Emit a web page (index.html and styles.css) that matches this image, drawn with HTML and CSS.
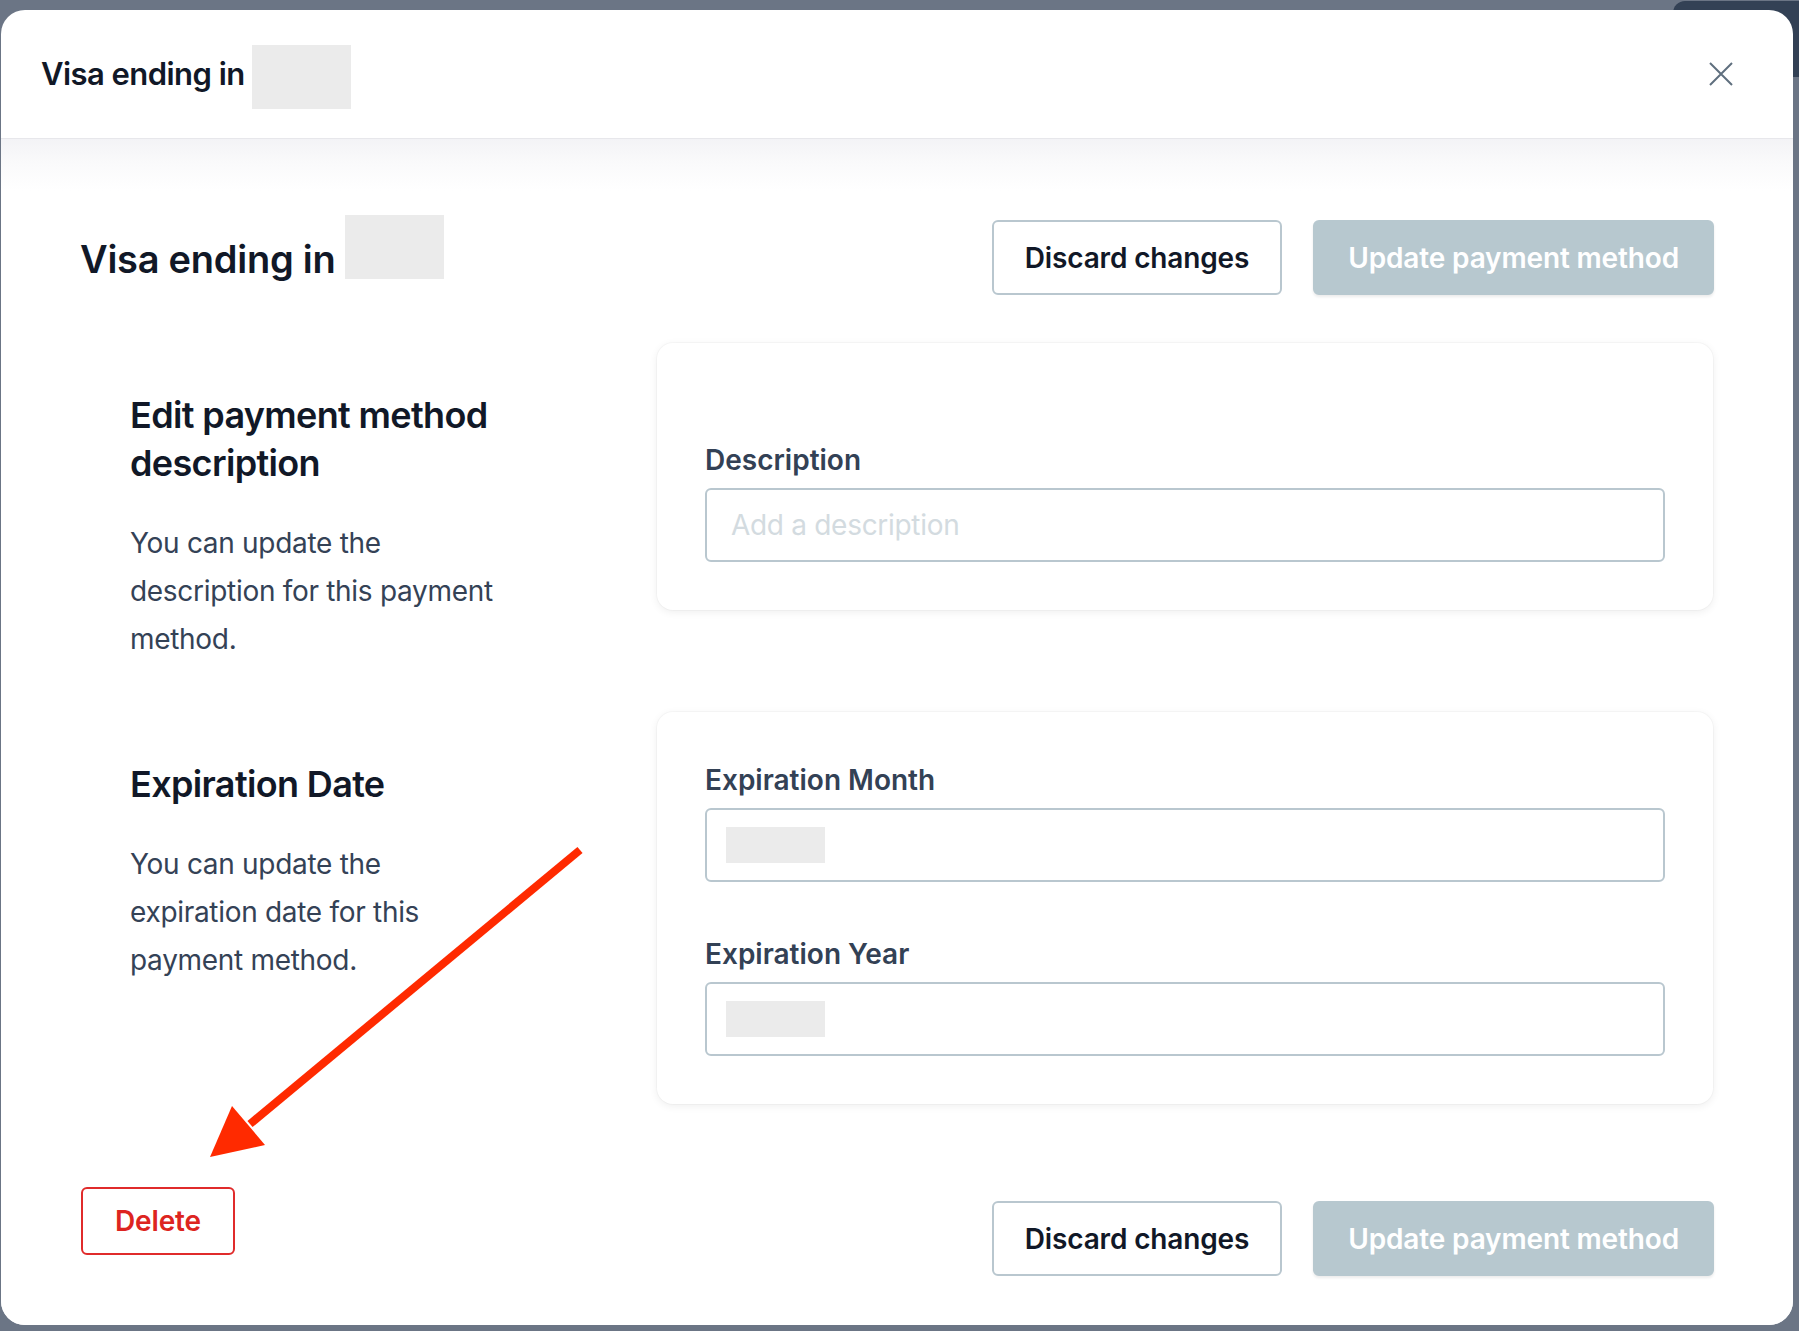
FILE: index.html
```html
<!DOCTYPE html>
<html lang="en">
<head>
<meta charset="utf-8">
<title>Visa ending in</title>
<link rel="stylesheet" href="styles.css">
</head>
<body>
<div class="backdrop">
  <div class="bg-tab"></div>
  <div class="modal">
    <header class="modal-header">
      <h1 class="modal-title">Visa ending in <span class="redact redact--title"></span></h1>
      <button class="close" type="button" aria-label="Close">
        <svg width="24" height="24" viewBox="0 0 24 24"><path d="M1 1 L23 23 M23 1 L1 23" stroke="#5f6f7e" stroke-width="2" fill="none"/></svg>
      </button>
    </header>
    <div class="modal-body">
      <div class="topbar">
        <h2 class="page-title">Visa ending in <span class="redact redact--page"></span></h2>
        <div class="actions actions--top">
          <button class="btn btn--secondary" type="button">Discard changes</button>
          <button class="btn btn--primary" type="button">Update payment method</button>
        </div>
      </div>

      <div class="sections">
        <section class="section">
          <div class="section-intro">
            <h3 class="section-title">Edit payment method description</h3>
            <p class="section-text">You can update the description for this payment method.</p>
          </div>
          <div class="card card--desc">
            <div class="field">
              <label class="field-label" for="desc">Description</label>
              <input class="input" id="desc" type="text" placeholder="Add a description">
            </div>
          </div>
        </section>

        <section class="section">
          <div class="section-intro">
            <h3 class="section-title">Expiration Date</h3>
            <p class="section-text">You can update the expiration date for this payment method.</p>
          </div>
          <div class="card">
            <div class="field">
              <div class="field-label">Expiration Month</div>
              <div class="input input--filled"><span class="redact redact--value"></span></div>
            </div>
            <div class="field">
              <div class="field-label">Expiration Year</div>
              <div class="input input--filled"><span class="redact redact--value"></span></div>
            </div>
          </div>
        </section>
      </div>

      <div class="footer">
        <button class="btn btn--danger" type="button">Delete</button>
        <div class="actions actions--bottom">
          <button class="btn btn--secondary" type="button">Discard changes</button>
          <button class="btn btn--primary" type="button">Update payment method</button>
        </div>
      </div>
    </div>
  </div>
  <svg class="annotation" width="1799" height="1331" viewBox="0 0 1799 1331">
    <line x1="580" y1="850" x2="250" y2="1124" stroke="#ff2a00" stroke-width="8"/>
    <polygon points="210,1157 232,1106 265,1145" fill="#ff2a00"/>
  </svg>
</div>
</body>
</html>
```

FILE: styles.css
```css
* { box-sizing: border-box; }

html, body {
  margin: 0;
  padding: 0;
}

body {
  font-family: Inter, "Noto Sans", "Liberation Sans", sans-serif;
  color: #111827;
  background: #6b7585;
}

.backdrop {
  position: relative;
  width: 1799px;
  height: 1331px;
  overflow: hidden;
  background: #6b7585;
  padding: 10px 0 0 1px;
}

.bg-tab {
  position: absolute;
  left: 1673px;
  top: 1px;
  width: 140px;
  height: 76px;
  background: #334155;
  border-top-left-radius: 12px;
}

.modal {
  position: relative;
  z-index: 1;
  width: 1792px;
  height: 1315px;
  background: #fff;
  border-radius: 24px;
  overflow: hidden;
  display: flex;
  flex-direction: column;
}

.modal-header {
  height: 129px;
  flex: 0 0 129px;
  border-bottom: 1px solid #e7e7eb;
  display: flex;
  align-items: center;
  justify-content: space-between;
  padding: 5px 60px 0 40px;
}

.modal-title {
  margin: 0;
  font-size: 31px;
  line-height: 40px;
  font-weight: 600;
  color: #111827;
  letter-spacing: -0.55px;
}

.redact {
  display: inline-block;
  background: #ebebeb;
}

.redact--title {
  width: 99px;
  height: 64px;
  vertical-align: middle;
}

.close {
  border: 0;
  background: transparent;
  padding: 0;
  width: 24px;
  height: 24px;
  display: flex;
  margin-top: -5px;
}

.modal-body {
  flex: 1;
  padding: 76px 79px 50px 79px;
  background: linear-gradient(to bottom, #f3f3f6 0, #fafafb 24px, #ffffff 52px);
}

.topbar {
  display: flex;
  justify-content: space-between;
  align-items: flex-start;
  margin-bottom: 48px;
}

.page-title {
  margin: 0;
  font-size: 38px;
  line-height: 48px;
  font-weight: 600;
  color: #111827;
  letter-spacing: -0.25px;
}

.redact--page {
  width: 99px;
  height: 64px;
  vertical-align: -6px;
}

.actions {
  display: flex;
  gap: 31px;
}

.actions--top { margin-top: 5px; }
.actions--bottom { margin-top: 14px; }

.btn {
  height: 75px;
  padding: 0 31px;
  border-radius: 6px;
  font-family: inherit;
  font-size: 28px;
  font-weight: 600;
  line-height: 1;
  cursor: pointer;
  letter-spacing: -0.15px;
}

.btn--secondary {
  background: #fff;
  border: 2px solid #b9c7cf;
  color: #111827;
}

.btn--primary {
  background: #b7c8cf;
  border: 2px solid #b7c8cf;
  color: #fff;
  padding: 0 33px;
  box-shadow: 0 2px 3px rgba(0, 0, 0, 0.08);
}

.btn--danger {
  height: 68px;
  width: 154px;
  padding: 0;
  background: #fff;
  border: 2px solid #e02b2b;
  color: #dd2420;
}

.sections {
  display: flex;
  flex-direction: column;
  gap: 49px;
}

.section {
  display: grid;
  grid-template-columns: 577px 1056px;
  align-items: start;
}

.section-intro {
  padding: 48px 0 0 50px;
  width: 432px;
}

.section-title {
  margin: 0 0 32px;
  font-size: 36px;
  line-height: 48px;
  font-weight: 600;
  color: #111827;
  letter-spacing: -0.65px;
}

.section-text {
  margin: 0;
  font-size: 28px;
  line-height: 48px;
  font-weight: 400;
  color: #344256;
  letter-spacing: -0.3px;
}

.card {
  background: #fff;
  border-radius: 16px;
  box-shadow: 0 0 0 1px rgba(0, 0, 0, 0.025), 0 2px 8px rgba(0, 0, 0, 0.07);
  padding: 48px;
  display: flex;
  flex-direction: column;
  gap: 52px;
}

.card--desc {
  padding-top: 97px;
}

.field-label {
  display: block;
  font-size: 28px;
  line-height: 40px;
  font-weight: 600;
  color: #334155;
  margin-bottom: 8px;
}

.input {
  display: block;
  width: 100%;
  height: 74px;
  border: 2px solid #b9c7cf;
  border-radius: 6px;
  padding: 0 24px;
  font-family: inherit;
  font-size: 28px;
  color: #111827;
  background: #fff;
  letter-spacing: -0.3px;
}

.input::placeholder {
  color: #d3dbe0;
}

.input--filled {
  display: flex;
  align-items: center;
}

.redact--value {
  width: 99px;
  height: 36px;
  margin-left: -5px;
}

.footer {
  display: flex;
  justify-content: space-between;
  align-items: flex-start;
  margin-top: 83px;
}

.footer .btn--danger { margin-left: 1px; }

.annotation {
  position: absolute;
  left: 0;
  top: 0;
  z-index: 2;
  pointer-events: none;
}
```
